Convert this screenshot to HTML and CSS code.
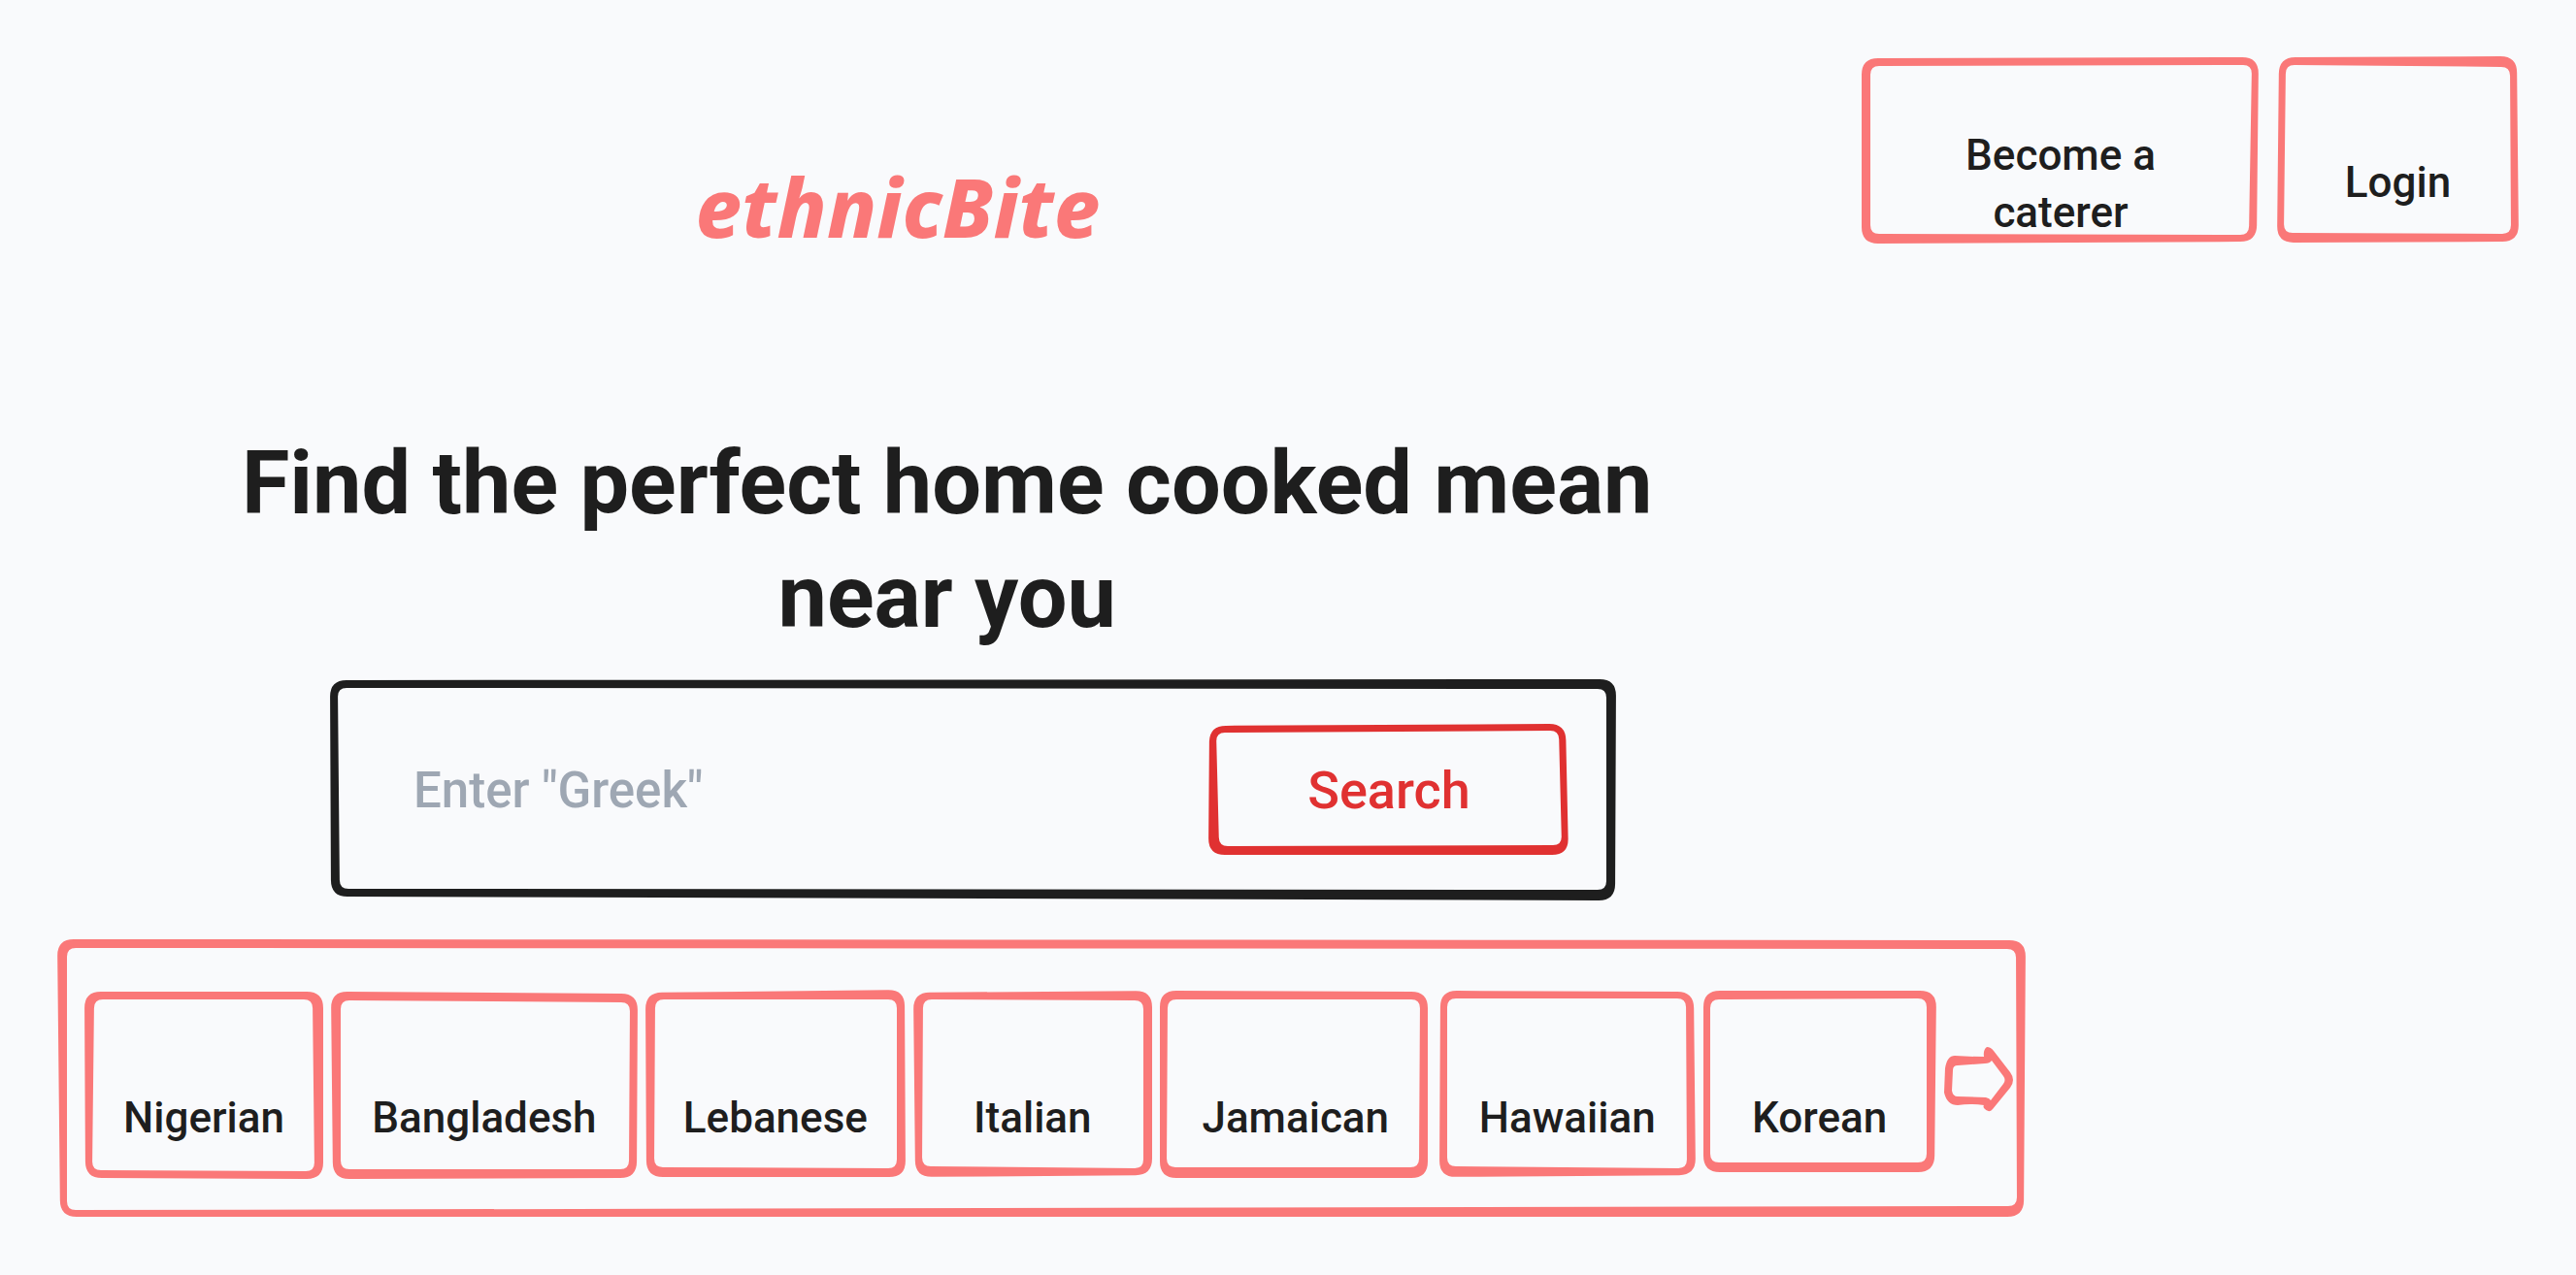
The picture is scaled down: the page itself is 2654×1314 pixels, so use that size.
FILE: index.html
```html
<!DOCTYPE html>
<html lang="en">
<head>
  <meta charset="utf-8">
  <meta name="viewport" content="width=device-width, initial-scale=1">
  <title>ethnicBite</title>
  <link rel="stylesheet" href="styles.css">
</head>
<body>
  <header class="header">
    <a class="logo" href="#">ethnicBite</a>
    <nav class="actions" aria-label="Account">
      <button class="sketch action action-wide" type="button" data-sketch="0,1 1,0 3,2 0,0 9,9 8,8 11,9 9,10">Become a caterer</button>
      <button class="sketch action" type="button" data-sketch="2,0 2,-1 0,2 0,1 9,8 9,10 8,10 7,11">Login</button>
    </nav>
  </header>

  <main>
    <h1 class="title">Find the perfect home cooked mean near you</h1>

    <form class="sketch search" data-sketch="0,1 2,0 3,0 1,4 8,9 12,10 12,11 10,12">
      <input class="search-input" type="text" aria-label="Cuisine" placeholder="Enter &quot;Greek&quot;">
      <button class="sketch search-button" type="button" data-sketch="1,2 4,0 1,1 0,1 8,9 11,7 8,11 11,10">Search</button>
    </form>

    <section class="sketch cuisines" aria-label="Cuisines" data-sketch="0,0 0,1 2,0 3,0 10,9 10,10 9,11 10,7">
      <button class="sketch cuisine" type="button" data-sketch="0,0 0,0 0,0 1,1 10,8 11,8 9,8 8,9">Nigerian</button>
      <button class="sketch cuisine" type="button" data-sketch="0,0 0,2 1,1 2,0 10,9 8,11 9,10 10,10">Bangladesh</button>
      <button class="sketch cuisine" type="button" data-sketch="0,1 1,-2 0,2 1,2 10,8 9,8 9,11 9,12">Lebanese</button>
      <button class="sketch cuisine" type="button" data-sketch="0,1 0,-1 0,4 2,2 10,8 9,9 9,11 9,13">Italian</button>
      <button class="sketch cuisine" type="button" data-sketch="0,-1 4,0 4,1 0,1 8,8 12,8 13,12 7,12">Jamaican</button>
      <button class="sketch cuisine" type="button" data-sketch="1,-1 2,0 0,4 0,2 8,7 10,7 9,11 8,13">Hawaiian</button>
      <button class="sketch cuisine" type="button" data-sketch="0,-1 0,-1 2,7 0,7 7,8 10,7 10,17 7,17">Korean</button>
      <button class="next" type="button" aria-label="More cuisines">
        <svg class="next-icon" viewBox="0 0 71 67" aria-hidden="true">
          <path fill-rule="evenodd" d="M11 9 Q26 10 41 10 Q40 3 44 0 Q48 0 51 4 L68 26 Q74 34 68 42 L50 64 Q46 69 41 63 Q40 61 41 60 Q27 58 14 60 Q3 60 0 47 L1 22 Q3 9 11 9 Z M14 19 Q9 19 9 24 L8 45 Q9 51 14 51 L43 52 Q47 53 48 55 L61 38 Q64 34 61 30 L49 14 Q47 17 42 17 Z"/>
        </svg>
      </button>
    </section>
  </main>
  <script src="sketch.js"></script>
</body>
</html>
```
FILE: styles.css
```css
* {
  box-sizing: border-box;
}

:root {
  --coral: #fa7878;
  --red: #e03131;
  --ink: #1e1e1e;
  --muted: #9ea7b3;
}

body {
  margin: 0;
  background: #f9fafc;
  color: var(--ink);
  font-family: Roboto, "Liberation Sans", sans-serif;
  font-weight: 500;
}

button {
  margin: 0;
  padding: 0;
  border: 0;
  background: none;
  color: inherit;
  font: inherit;
  cursor: pointer;
}

/* Hand-drawn frames: sketch.js puts an svg behind the content */
.sketch {
  position: relative;
  color: var(--ink);
}

.frame {
  position: absolute;
  inset: 0;
  width: 100%;
  height: 100%;
  overflow: visible;
  pointer-events: none;
  fill: var(--coral);
}

.header {
  display: flex;
  align-items: flex-start;
  padding: 59px 59px 0 27%;
}

.logo {
  margin-top: 102px;
  color: var(--coral);
  font-family: "Noto Sans", sans-serif;
  font-size: 84px;
  font-style: italic;
  font-weight: 800;
  line-height: 104px;
  text-decoration: none;
}

.actions {
  display: flex;
  gap: 18px;
  margin-left: auto;
}

.action {
  display: flex;
  justify-content: center;
  align-items: flex-start;
  width: 249px;
  height: 192px;
  padding-top: 100px;
  font-size: 44px;
  line-height: 59px;
}

.action-wide {
  width: 410px;
  padding: 72px 100px 0;
}

.title {
  width: 57%;
  margin: 175px 0 26px 8%;
  padding-left: 14px;
  font-size: 90px;
  font-weight: 700;
  line-height: 117px;
  text-align: center;
}

.search {
  display: flex;
  align-items: center;
  gap: 24px;
  width: 50%;
  height: 228px;
  margin-left: 340px;
  padding: 0 50px 0 86px;
}

.search > .frame {
  fill: var(--ink);
}

.search-input {
  flex: 1;
  min-width: 0;
  height: 88px;
  padding: 0;
  border: 0;
  outline: 0;
  background: none;
  color: var(--ink);
  font: inherit;
  font-size: 51px;
}

.search-input::placeholder {
  color: var(--muted);
  opacity: 1;
}

.search-button {
  width: 372px;
  height: 136px;
  color: var(--red);
  font-size: 54px;
}

.search-button .frame {
  fill: var(--red);
}

.cuisines {
  display: grid;
  grid-template-columns: 246fr 316fr 268fr 246fr 280fr 264fr 240fr 71fr;
  align-items: center;
  gap: 8px;
  width: 76.4%;
  margin: 40px 0 58px 59px;
  padding: 54px 13px 39px 28px;
}

.cuisine {
  height: 193px;
  padding-top: 68px;
  font-size: 44px;
  line-height: 59px;
}

.next {
  display: flex;
  align-items: center;
  padding-bottom: 12px;
}

.next-icon {
  width: 100%;
  fill: var(--coral);
}
```
FILE: sketch.js
```js
// Draws an uneven rounded frame behind each .sketch element.
// data-sketch holds eight corner insets "x,y": four outer, then four inner,
// each set in the order top left, top right, bottom right, bottom left.
const NS = "http://www.w3.org/2000/svg";

function ring(corners, radius) {
  const toward = (a, b) => {
    const t = radius / Math.hypot(b[0] - a[0], b[1] - a[1]);
    return [a[0] + (b[0] - a[0]) * t, a[1] + (b[1] - a[1]) * t].join(" ");
  };
  return corners.map((c, i) => {
    const before = corners[(i + 3) % 4];
    const after = corners[(i + 1) % 4];
    return `${i ? "L" : "M"}${toward(c, before)} Q${c.join(" ")} ${toward(c, after)}`;
  }).join(" ") + " Z";
}

function draw(el) {
  const w = el.offsetWidth;
  const h = el.offsetHeight;
  const points = el.dataset.sketch.split(" ").map((pair, i) => {
    const [x, y] = pair.split(",").map(Number);
    const corner = i % 4;
    return [corner === 1 || corner === 2 ? w - x : x, corner > 1 ? h - y : y];
  });
  el.querySelector(":scope > .frame > path")
    .setAttribute("d", ring(points.slice(0, 4), 17) + " " + ring(points.slice(4), 9));
}

const observer = new ResizeObserver(entries => entries.forEach(e => draw(e.target)));

document.querySelectorAll(".sketch").forEach(el => {
  const svg = document.createElementNS(NS, "svg");
  const path = document.createElementNS(NS, "path");
  svg.setAttribute("class", "frame");
  svg.setAttribute("aria-hidden", "true");
  path.setAttribute("fill-rule", "evenodd");
  svg.append(path);
  el.append(svg);
  draw(el);
  observer.observe(el);
});
```
